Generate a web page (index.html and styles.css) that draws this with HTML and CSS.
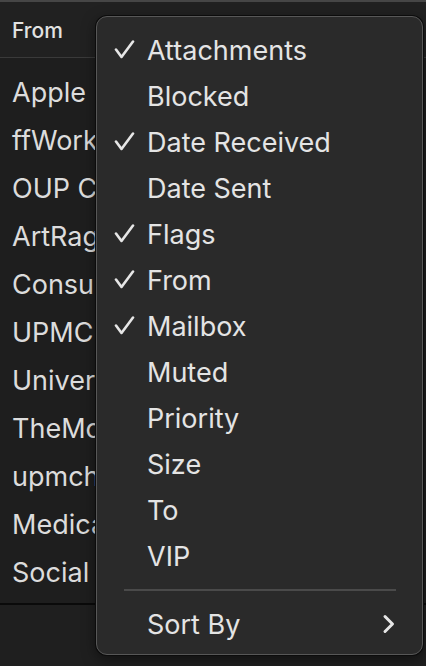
FILE: index.html
```
<!DOCTYPE html>
<html>
<head>
<meta charset="utf-8">
<link rel="stylesheet" href="styles.css">
</head>
<body>
<div class="app">
  <div class="header"><span class="col">From</span></div>
  <div class="list">
    <div class="row">Apple</div>
    <div class="row">ffWorks</div>
    <div class="row">OUP Customer</div>
    <div class="row">ArtRage</div>
    <div class="row">Consumer</div>
    <div class="row">UPMC</div>
    <div class="row">University</div>
    <div class="row">TheMotley</div>
    <div class="row">upmchealth</div>
    <div class="row">Medical</div>
    <div class="row">Social</div>
  </div>
  <div class="footer"></div>
  <div class="menu">
    <div class="item"><span class="check on"><svg width="22" height="20" viewBox="0 0 22 20"><path d="M2 9.5 L7.5 17 L19 1.5" fill="none" stroke="#e6e6e6" stroke-width="2.6" stroke-linecap="round" stroke-linejoin="round"/></svg></span>Attachments</div>
    <div class="item"><span class="check"></span>Blocked</div>
    <div class="item"><span class="check on"><svg width="22" height="20" viewBox="0 0 22 20"><path d="M2 9.5 L7.5 17 L19 1.5" fill="none" stroke="#e6e6e6" stroke-width="2.6" stroke-linecap="round" stroke-linejoin="round"/></svg></span>Date Received</div>
    <div class="item"><span class="check"></span>Date Sent</div>
    <div class="item"><span class="check on"><svg width="22" height="20" viewBox="0 0 22 20"><path d="M2 9.5 L7.5 17 L19 1.5" fill="none" stroke="#e6e6e6" stroke-width="2.6" stroke-linecap="round" stroke-linejoin="round"/></svg></span>Flags</div>
    <div class="item"><span class="check on"><svg width="22" height="20" viewBox="0 0 22 20"><path d="M2 9.5 L7.5 17 L19 1.5" fill="none" stroke="#e6e6e6" stroke-width="2.6" stroke-linecap="round" stroke-linejoin="round"/></svg></span>From</div>
    <div class="item"><span class="check on"><svg width="22" height="20" viewBox="0 0 22 20"><path d="M2 9.5 L7.5 17 L19 1.5" fill="none" stroke="#e6e6e6" stroke-width="2.6" stroke-linecap="round" stroke-linejoin="round"/></svg></span>Mailbox</div>
    <div class="item"><span class="check"></span>Muted</div>
    <div class="item"><span class="check"></span>Priority</div>
    <div class="item"><span class="check"></span>Size</div>
    <div class="item"><span class="check"></span>To</div>
    <div class="item"><span class="check"></span>VIP</div>
    <div class="sep"></div>
    <div class="item sub"><span class="check"></span><span class="label">Sort By</span>
      <svg class="chev" width="14" height="22" viewBox="0 0 14 22"><path d="M3 3.5 L10.5 11 L3 18.5" fill="none" stroke="#e6e6e6" stroke-width="3" stroke-linecap="round" stroke-linejoin="round"/></svg>
    </div>
  </div>
</div>
</body>
</html>
```
FILE: styles.css
```
html, body {
  margin: 0;
  padding: 0;
  background: #1e1e1e;
}
body {
  width: 426px;
  height: 666px;
  overflow: hidden;
  font-family: Inter, "Noto Sans", "Liberation Sans", sans-serif;
  color: #dedede;
}
.app {
  position: relative;
  width: 426px;
  height: 666px;
  background: #1f1f1f;
}
.header {
  border-top: 2px solid #464646;
  border-bottom: 1px solid #3a3a3a;
  background: #212121;
  display: flex;
  align-items: center;
  box-sizing: border-box;
  height: 58px;
  padding-left: 12px;
  padding-top: 2px;
}
.col {
  font-size: 21px;
  font-weight: 500;
  color: #e2e2e2;
}
.list {
  padding-top: 10px;
  height: 547px;
  box-sizing: border-box;
  background: #1e1e1e;
  border-bottom: 2px solid #0a0a0a;
}
.row {
  height: 48px;
  display: flex;
  align-items: center;
  padding-left: 12px;
  font-size: 27px;
  color: #dcdcdc;
  white-space: nowrap;
  overflow: hidden;
}
.footer {
  height: 60px;
  background: #1f1f1f;
}
.menu {
  position: absolute;
  left: 96px;
  top: 16px;
  width: 327px;
  height: 639px;
  box-sizing: border-box;
  background: #2a2a2a;
  border: 1px solid #575757;
  border-radius: 11px;
  box-shadow: 0 0 0 1px #0c0c0c, 0 4px 14px rgba(0,0,0,0.5);
  padding-top: 10px;
}
.item {
  height: 46px;
  display: flex;
  align-items: center;
  font-size: 27px;
  color: #e4e4e4;
  white-space: nowrap;
}
.check {
  width: 50px;
  flex: none;
  box-sizing: border-box;
  padding-left: 17px;
  display: flex;
  align-items: center;
}
.sep {
  height: 2px;
  background: #4a4a4a;
  margin: 10px 26px 10px 27px;
}
.sub .label {
  flex: 1;
}
.chev {
  margin-right: 26px;
}
```
